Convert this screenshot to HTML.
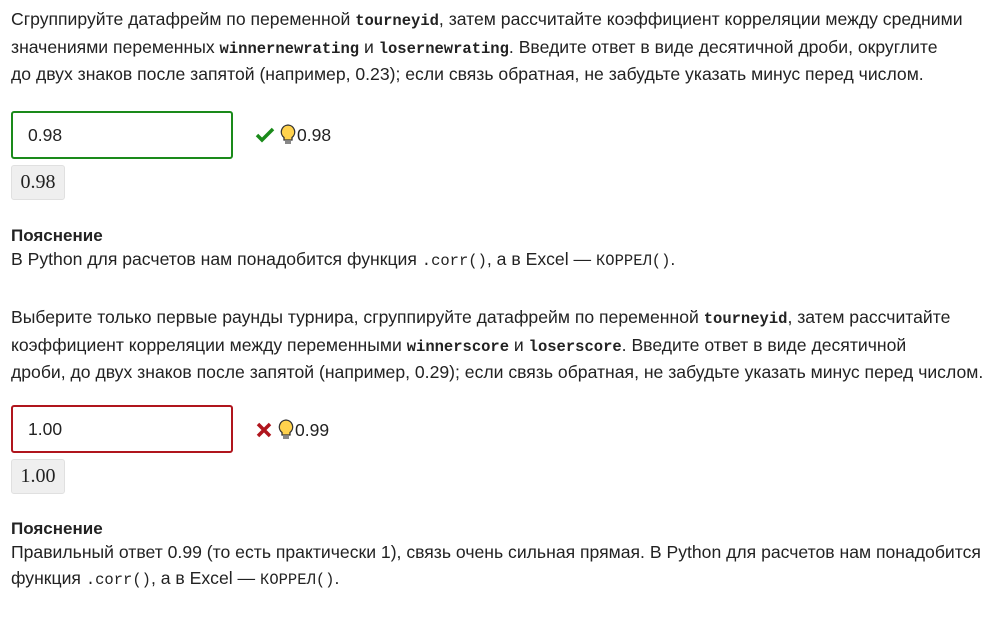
<!DOCTYPE html>
<html><head><meta charset="utf-8"><style>
body{margin:0;width:998px;height:626px;background:#fff;font-family:"Liberation Sans","DejaVu Sans",sans-serif;color:#222;font-size:17.6px;position:relative;overflow:hidden}
.p{position:absolute;left:11px;line-height:25.5px;margin:0;white-space:nowrap}
code{font-family:"Liberation Mono",monospace;font-size:15.5px}
b code{font-weight:bold}
.inp{position:absolute;left:11px;font-size:17.5px;line-height:44px;padding-left:15px;box-sizing:border-box;width:222px;height:48px;border-radius:3px}
.g{border:2px solid #1a8a1a}.r{border:2px solid #b0151d}
.ans{position:absolute;left:11px;width:54px;height:35px;background:#efefef;border:1px solid #e0e0e0;border-radius:3px;box-sizing:border-box;font-family:"Liberation Serif",serif;font-size:20px;line-height:33px;text-align:center;color:#222}
.fb{position:absolute;left:255px;font-size:17.5px;display:flex;align-items:center}
.h{font-weight:bold;font-size:17px}
</style></head><body>
<p class="p" style="top:7px">Сгруппируйте датафрейм по переменной <b><code>tourneyid</code></b>, затем рассчитайте коэффициент корреляции между средними<br>значениями переменных <b><code>winnernewrating</code></b> и <b><code>losernewrating</code></b>. Введите ответ в виде десятичной дроби, округлите<br>до двух знаков после запятой (например, 0.23); если связь обратная, не забудьте указать минус перед числом.</p>
<div class="inp g" style="top:111px">0.98</div>
<div class="fb" style="top:124px"><svg width="20" height="16" viewBox="0 0 20 16"><path d="M2 8l5 5L18 2" stroke="#1a8a1a" stroke-width="3.5" fill="none"/></svg><svg width="18" height="22" viewBox="0 0 18 22" style="margin-left:4px"><path d="M9 1a7 7 0 0 0-4 12.5V16h8v-2.5A7 7 0 0 0 9 1z" fill="#ffd24d" stroke="#333" stroke-width="1.3"/><rect x="6" y="17" width="6" height="3" fill="#888"/></svg>0.98</div>
<div class="ans" style="top:165px">0.98</div>
<p class="p h" style="top:223px">Пояснение</p>
<p class="p" style="top:247px">В Python для расчетов нам понадобится функция <code>.corr()</code>, а в Excel — <code>КОРРЕЛ()</code>.</p>
<p class="p" style="top:305px">Выберите только первые раунды турнира, сгруппируйте датафрейм по переменной <b><code>tourneyid</code></b>, затем рассчитайте<br>коэффициент корреляции между переменными <b><code>winnerscore</code></b> и <b><code>loserscore</code></b>. Введите ответ в виде десятичной<br>дроби, до двух знаков после запятой (например, 0.29); если связь обратная, не забудьте указать минус перед числом.</p>
<div class="inp r" style="top:405px">1.00</div>
<div class="fb" style="top:419px"><svg width="18" height="16" viewBox="0 0 18 16"><path d="M3 2l12 12M15 2L3 14" stroke="#b0151d" stroke-width="3.5"/></svg><svg width="18" height="22" viewBox="0 0 18 22" style="margin-left:4px"><path d="M9 1a7 7 0 0 0-4 12.5V16h8v-2.5A7 7 0 0 0 9 1z" fill="#ffd24d" stroke="#333" stroke-width="1.3"/><rect x="6" y="17" width="6" height="3" fill="#888"/></svg>0.99</div>
<div class="ans" style="top:459px">1.00</div>
<p class="p h" style="top:516px">Пояснение</p>
<p class="p" style="top:540px">Правильный ответ 0.99 (то есть практически 1), связь очень сильная прямая. В Python для расчетов нам понадобится<br>функция <code>.corr()</code>, а в Excel — <code>КОРРЕЛ()</code>.</p>
</body></html>
